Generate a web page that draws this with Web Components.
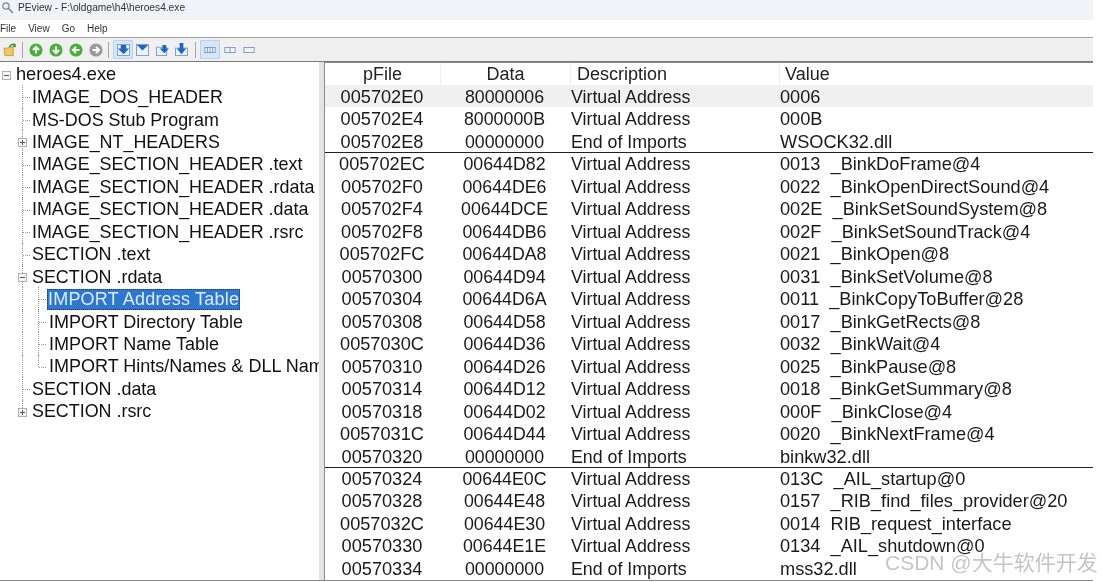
<!DOCTYPE html>
<html>
<head>
<meta charset="utf-8">
<title>PEview</title>
<style>
  html, body { margin: 0; padding: 0; background: #fff; }
  body { width: 1102px; height: 582px; overflow: hidden; font-family: "Liberation Sans", Arial, sans-serif; }
  pe-app { width: 1102px; height: 582px; }
</style>
</head>
<body>
<pe-app></pe-app>
<script>
// title bar
class PeTitlebar extends HTMLElement {
  constructor() {
    super();
    this.attachShadow({ mode: 'open' });
    this.shadowRoot.innerHTML = `
      <style>
        :host { display: flex; align-items: center; height: 14px; width: 1092px; padding-bottom: 6px; background: #f0f4f9; color: #333; font-size: 10.2px; padding-left: 1px; gap: 4px; }
        svg { width: 13px; height: 13px; }
      </style>
      <svg viewBox="0 0 13 13" fill="none" stroke="#7c8794" stroke-width="1.2">
        <circle cx="5" cy="5" r="3.2" fill="#e6eef5"/><path d="M7.5 7.5 L12 12" stroke-width="1.6"/>
      </svg>
      <span>PEview - F:\\oldgame\\h4\\heroes4.exe</span>`;
  }
}

// menu bar
class PeMenubar extends HTMLElement {
  constructor() {
    super();
    this.attachShadow({ mode: 'open' });
    this.shadowRoot.innerHTML = `
      <style>
        :host { display: flex; align-items: center; height: 17px; background: #fff; color: #333; font-size: 10px; gap: 12px; }
      </style>
      <span>File</span><span>View</span><span>Go</span><span>Help</span>`;
  }
}

// toolbar
class PeToolbar extends HTMLElement {
  constructor() {
    super();
    this.attachShadow({ mode: 'open' });
    const round = (color, d) => `<svg class="i" viewBox="0 0 16 16"><circle cx="8" cy="8" r="7.500" fill="${color}"/><path d="${d}" fill="none" stroke="#fff" stroke-width="2.2"/></svg>`;
    const up = 'M8 12V5M4.5 8 8 4.5 11.5 8';
    const down = 'M8 4v7M4.5 8 8 11.5 11.5 8';
    const left = 'M12 8H5M8 4.5 4.5 8 8 11.5';
    const right = 'M4 8h7M8 4.5 11.5 8 8 11.5';
    this.shadowRoot.innerHTML = `
      <style>
        :host { display: flex; align-items: center; height: 23px; background: #f0f0f0; border-top: 1px solid #a3a3a3; border-bottom: 1px solid #7a7a7a; padding-left: 3px; width: 1090px; }
        svg { display: block; }
        .i { width: 14px; height: 14px; margin-right: 6px; }
        .sep { width: 1px; height: 16px; background: #a8a8a8; flex: none; }
        .btn { width: 19px; height: 19px; display: flex; align-items: center; justify-content: center; flex: none; }
        .on { width: 20px; background: #d5e6f6; outline: 1px solid #b6d2ec; outline-offset: -1px; border-radius: 1px; }
      </style>
      <svg width="15" height="16" viewBox="0 0 16 16" style="margin-right:-1px">
        <path d="M1 6h4l1-1h5v9H2z" fill="#f1c75c" stroke="#b48a2c" stroke-width=".7"/>
        <path d="M7 5c1-3 4-4 6-2" fill="none" stroke="#3f9a3a" stroke-width="1.8"/><path d="M13 .8 14 5l-4-.5z" fill="#3f9a3a"/>
      </svg>
      <div class="sep" style="margin:0 6px 0 5px"></div>
      ${round('#4caf3e', up)}${round('#4caf3e', down)}${round('#4caf3e', left)}${round('#9a9a9a', right)}
      <div class="sep" style="margin:0 4px 0 -1px"></div>
      <div class="btn on"><svg width="13" height="12" viewBox="0 0 14 13"><rect x=".5" y=".5" width="13" height="12" fill="#eaf1f9" stroke="#7c9cc4"/><path d="M4 1h6v4h3l-6 6-6-6h3z" fill="#1f66c1"/></svg></div>
      <div class="btn"><svg width="13" height="12" viewBox="0 0 14 13"><rect x=".5" y=".5" width="13" height="12" fill="#eaf1f9" stroke="#7c9cc4"/><path d="M1 1h12L7 7z" fill="#1f66c1"/></svg></div>
      <div class="btn" style="margin-left:1px"><svg width="13" height="12" viewBox="0 0 14 13"><rect x=".5" y="3.500" width="11" height="9" fill="#eaf1f9" stroke="#7c9cc4"/><path d="M7 1h4v4h3l-5 5-5-5h3z" fill="#1f66c1"/></svg></div>
      <div class="btn"><svg width="13" height="14" viewBox="0 0 14 15"><rect x=".5" y="5.500" width="13" height="8" fill="#eaf1f9" stroke="#7c9cc4"/><path d="M5 0h4v6h3l-5 6-5-6h3z" fill="#1f66c1"/></svg></div>
      <div class="sep" style="margin:0 4px 0 4px"></div>
      <div class="btn on"><svg width="12" height="6" viewBox="0 0 13 7"><rect x=".5" y=".5" width="12" height="6" fill="#eef3f9" stroke="#6f93c4"/><path d="M3.500 1v5M6.500 1v5M9.500 1v5" stroke="#6f93c4"/></svg></div>
      <div class="btn"><svg width="12" height="6" viewBox="0 0 13 7"><rect x=".5" y=".5" width="12" height="6" fill="#eef3f9" stroke="#6f93c4"/><path d="M6.500 1v5" stroke="#6f93c4"/></svg></div>
      <div class="btn"><svg width="12" height="6" viewBox="0 0 13 7"><rect x=".5" y=".5" width="12" height="6" fill="#eef3f9" stroke="#6f93c4"/></svg></div>`;
  }
}

// one row of the tree; level 0 root, 1 child, 2 grandchild
class PeTreeItem extends HTMLElement {
  constructor() {
    super();
    this.attachShadow({ mode: 'open' });
  }
  connectedCallback() {
    const level = +this.getAttribute('level') || 0;
    const box = this.getAttribute('box');
    const selected = this.hasAttribute('selected');
    const pad = [16, 32, 49][level];
    const size = [18.2, 17.9, 18][level];
    const glyph = box === 'plus' ? '<path d="M2 4.500h5M4.500 2v5" stroke="#556"/>' : '<path d="M2 4.500h5" stroke="#556"/>';
    this.shadowRoot.innerHTML = `
      <style>
        :host { display: flex; align-items: center; box-sizing: border-box; height: 22.45px; padding-top: ${level ? 2 : 0}px; position: relative; padding-left: ${pad}px; white-space: nowrap; font-size: ${size}px; color: #111; }
        .t { position: relative; z-index: 1; }
        .sel { background: #2f76cf; color: #d9ecff; outline: 1px dotted #163a66; outline-offset: -1px; padding: 0 1px; margin-left: -2px; line-height: 21px; letter-spacing: .2px; }
        .box { position: absolute; left: ${level === 0 ? 2 : 18}px; top: 8px; z-index: 1; }
        .h { position: absolute; left: ${level === 2 ? 39 : 23}px; width: 7px; top: 12px; border-top: 1px dotted #999; }
        .v { position: absolute; left: ${level === 2 ? 38 : 22}px; top: 0; bottom: ${this.hasAttribute('last') ? '10px' : '0'}; border-left: 1px dotted #999; }
        .trunk { position: absolute; left: 22px; top: 0; bottom: 0; border-left: 1px dotted #999; }
      </style>
      ${level === 2 ? '<div class="trunk"></div>' : ''}
      ${level > 0 ? '<div class="v"></div>' : ''}
      ${level > 0 && !box ? '<div class="h"></div>' : ''}
      ${box ? `<svg class="box" width="9" height="9" viewBox="0 0 9 9"><rect x=".5" y=".5" width="8" height="8" fill="#f4f6f9" stroke="#a9b0b8"/>${glyph}</svg>` : ''}
      <span class="t ${selected ? 'sel' : ''}"><slot></slot></span>`;
  }
}

// left tree pane
class PeTree extends HTMLElement {
  constructor() {
    super();
    this.attachShadow({ mode: 'open' });
    this.shadowRoot.innerHTML = `
      <style>
        :host { display: block; width: 319px; overflow: hidden; background: #fff; padding-top: 1px; box-sizing: border-box; flex: none; }
      </style>
      <slot></slot>`;
  }
}

// table row, the cells come in as attributes
class PeRow extends HTMLElement {
  constructor() {
    super();
    this.attachShadow({ mode: 'open' });
  }
  connectedCallback() {
    const [a, b, c, d] = this.getAttribute('cells').split('|');
    this.shadowRoot.innerHTML = `
      <style>
        :host { display: grid; grid-template-columns: 114px 131px 209px 1fr; height: 22.48px; padding-top: 2px; align-items: center; font-size: 17.800px; color: #1a1a1a; white-space: pre; box-sizing: border-box; }
        :host([hi]) { background: #f0f0f0; }
        :host([rule]) { box-shadow: inset 0 1px 0 #222; }
        .c { text-align: center; }
        .a { font-size: 18.200px; }
        .l { padding-left: 1px; }
        .v { font-size: 18.200px; }
      </style>
      <span class="c a">${a}</span><span class="c">${b}</span><span class="l">${c}</span><span class="l v">${d}</span>`;
  }
}

// right table pane
class PeTable extends HTMLElement {
  constructor() {
    super();
    this.attachShadow({ mode: 'open' });
    this.shadowRoot.innerHTML = `
      <style>
        :host { display: block; flex: 1; margin-left: 5px; background: #fff; border-left: 1px solid #8a8a8a; border-top: 1px solid #8a8a8a; overflow: hidden; box-sizing: border-box; }
        .head { display: grid; grid-template-columns: 116px 130px 209px 1fr; height: 22px; font-size: 18px; color: #222; align-items: center; }
        .head span { border-right: 1px solid #efefef; height: 100%; display: flex; align-items: center; justify-content: center; box-sizing: border-box; }
        .head span.l { justify-content: flex-start; padding-left: 6px; }
        .head span:last-child { border: 0; padding-left: 5px; }
      </style>
      <div class="head"><span>pFile</span><span>Data</span><span class="l">Description</span><span class="l">Value</span></div>
      <slot></slot>`;
  }
}

// watermark over the bottom right corner
class PeWatermark extends HTMLElement {
  constructor() {
    super();
    this.attachShadow({ mode: 'open' });
    this.shadowRoot.innerHTML = `
      <style>
        :host { position: absolute; left: 885px; top: 546px; font: 21px "Liberation Sans", "Noto Sans CJK SC", sans-serif; color: rgba(150,150,150,.55); white-space: nowrap; }
      </style>
      CSDN @大牛软件开发`;
  }
}

class PeApp extends HTMLElement {
  constructor() {
    super();
    this.attachShadow({ mode: 'open' });
    const tree = [
      [0, 'heroes4.exe', 'box=minus'],
      [1, 'IMAGE_DOS_HEADER'],
      [1, 'MS-DOS Stub Program'],
      [1, 'IMAGE_NT_HEADERS', 'box=plus'],
      [1, 'IMAGE_SECTION_HEADER .text'],
      [1, 'IMAGE_SECTION_HEADER .rdata'],
      [1, 'IMAGE_SECTION_HEADER .data'],
      [1, 'IMAGE_SECTION_HEADER .rsrc'],
      [1, 'SECTION .text'],
      [1, 'SECTION .rdata', 'box=minus'],
      [2, 'IMPORT Address Table', 'selected'],
      [2, 'IMPORT Directory Table'],
      [2, 'IMPORT Name Table'],
      [2, 'IMPORT Hints/Names &amp; DLL Names', 'last'],
      [1, 'SECTION .data'],
      [1, 'SECTION .rsrc', 'box=plus last']
    ];
    const rows = [
      ['005702E0|80000006|Virtual Address|0006', 'hi'],
      ['005702E4|8000000B|Virtual Address|000B'],
      ['005702E8|00000000|End of Imports|WSOCK32.dll'],
      ['005702EC|00644D82|Virtual Address|0013  _BinkDoFrame@4', 'rule'],
      ['005702F0|00644DE6|Virtual Address|0022  _BinkOpenDirectSound@4'],
      ['005702F4|00644DCE|Virtual Address|002E  _BinkSetSoundSystem@8'],
      ['005702F8|00644DB6|Virtual Address|002F  _BinkSetSoundTrack@4'],
      ['005702FC|00644DA8|Virtual Address|0021  _BinkOpen@8'],
      ['00570300|00644D94|Virtual Address|0031  _BinkSetVolume@8'],
      ['00570304|00644D6A|Virtual Address|0011  _BinkCopyToBuffer@28'],
      ['00570308|00644D58|Virtual Address|0017  _BinkGetRects@8'],
      ['0057030C|00644D36|Virtual Address|0032  _BinkWait@4'],
      ['00570310|00644D26|Virtual Address|0025  _BinkPause@8'],
      ['00570314|00644D12|Virtual Address|0018  _BinkGetSummary@8'],
      ['00570318|00644D02|Virtual Address|000F  _BinkClose@4'],
      ['0057031C|00644D44|Virtual Address|0020  _BinkNextFrame@4'],
      ['00570320|00000000|End of Imports|binkw32.dll'],
      ['00570324|00644E0C|Virtual Address|013C  _AIL_startup@0', 'rule'],
      ['00570328|00644E48|Virtual Address|0157  _RIB_find_files_provider@20'],
      ['0057032C|00644E30|Virtual Address|0014  RIB_request_interface'],
      ['00570330|00644E1E|Virtual Address|0134  _AIL_shutdown@0'],
      ['00570334|00000000|End of Imports|mss32.dll']
    ];
    const treeHtml = tree.map(([level, label, attrs]) =>
      `<pe-tree-item level="${level}" ${attrs || ''}>${label}</pe-tree-item>`).join('');
    const rowHtml = rows.map(([cells, attr]) => `<pe-row cells="${cells}" ${attr || ''}></pe-row>`).join('');
    this.shadowRoot.innerHTML = `
      <style>
        :host { display: flex; flex-direction: column; width: 1102px; height: 582px; background: #fff; position: relative; font-family: "Liberation Sans", Arial, sans-serif; filter: blur(.3px); }
        .main { display: flex; height: 519px; width: 1093px; background: #e4e4e4; border-bottom: 1px solid #8a8a8a; box-sizing: border-box; }
      </style>
      <pe-titlebar></pe-titlebar>
      <pe-menubar></pe-menubar>
      <pe-toolbar></pe-toolbar>
      <div class="main">
        <pe-tree>${treeHtml}</pe-tree>
        <pe-table>${rowHtml}</pe-table>
      </div>
      <pe-watermark></pe-watermark>`;
  }
}

customElements.define('pe-titlebar', PeTitlebar);
customElements.define('pe-menubar', PeMenubar);
customElements.define('pe-toolbar', PeToolbar);
customElements.define('pe-tree-item', PeTreeItem);
customElements.define('pe-tree', PeTree);
customElements.define('pe-row', PeRow);
customElements.define('pe-table', PeTable);
customElements.define('pe-watermark', PeWatermark);
customElements.define('pe-app', PeApp);
</script>
</body>
</html>
